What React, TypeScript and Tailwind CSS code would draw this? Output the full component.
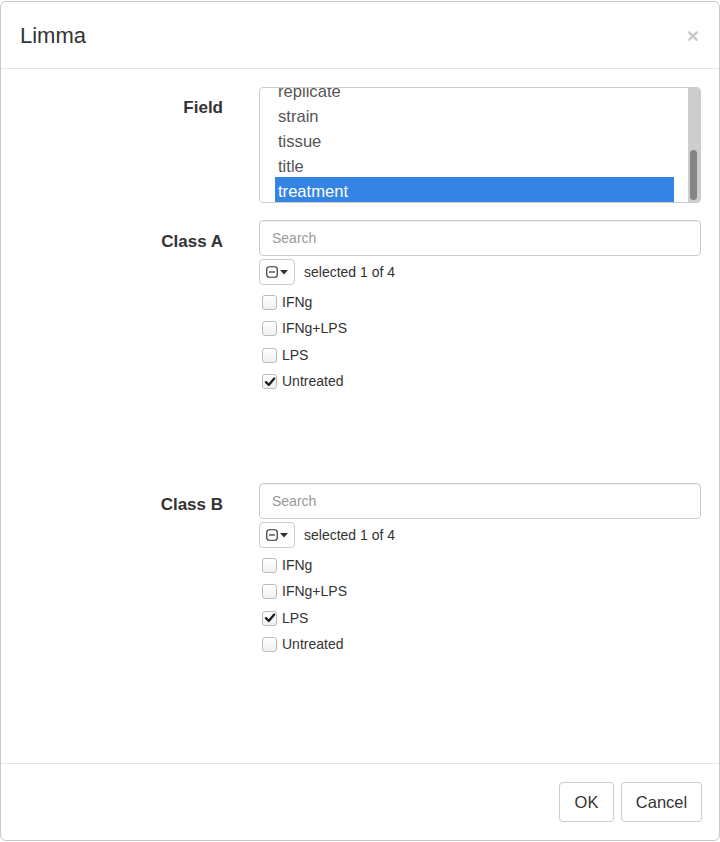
import { useState } from "react";

const fieldItems = ["replicate", "strain", "tissue", "title", "treatment"];

function Checkbox({ checked }: { checked: boolean }) {
  return (
    <span className="flex h-[15px] w-[15px] shrink-0 items-center justify-center rounded-[3px] border border-[#bcbcbc] bg-gradient-to-b from-white to-[#f0f0f0]">
      {checked && (
        <svg viewBox="0 0 12 12" className="h-[12px] w-[12px]">
          <path d="M2 6.2 L4.8 9 L10.2 2.6" fill="none" stroke="#222" strokeWidth="2.4" strokeLinecap="round" strokeLinejoin="round" />
        </svg>
      )}
    </span>
  );
}

function ClassPicker({ label, selected }: { label: string; selected: string }) {
  const options = ["IFNg", "IFNg+LPS", "LPS", "Untreated"];
  return (
    <div className="flex h-[263px]">
      <div className="w-[222px] shrink-0 pt-[9px] text-right text-[17px] font-bold text-[#333]">{label}</div>
      <div className="ml-[36px] flex-1">
        <input
          placeholder="Search"
          className="h-[36px] w-full rounded-[4px] border border-[#ccc] px-[12px] text-[14px] text-[#555] shadow-[inset_0_1px_1px_rgba(0,0,0,0.075)] outline-none placeholder:text-[#999]"
        />
        <div className="mt-[3px] flex items-center">
          <button className="flex h-[26px] w-[36px] items-center justify-center gap-[2px] rounded-[4px] border border-[#ccc] bg-white">
            <svg viewBox="0 0 12 12" className="h-[12px] w-[12px]">
              <rect x="0.75" y="0.75" width="10.5" height="10.5" rx="2.5" fill="none" stroke="#333" strokeWidth="1.2" />
              <path d="M3 6 H9" stroke="#333" strokeWidth="1.2" />
            </svg>
            <svg viewBox="0 0 8 5" className="h-[5px] w-[8px]">
              <path d="M0 0 H8 L4 4.5 Z" fill="#333" />
            </svg>
          </button>
          <span className="ml-[9px] text-[14px] text-[#333]">selected 1 of 4</span>
        </div>
        <ul className="mt-[4px] ml-[3px]">
          {options.map((o) => (
            <li key={o} className="flex h-[26.5px] items-center gap-[5px] text-[14px] text-[#333]">
              <Checkbox checked={o === selected} />
              <span>{o}</span>
            </li>
          ))}
        </ul>
      </div>
    </div>
  );
}

export default function App() {
  const [field] = useState("treatment");

  return (
    <div className="h-[842px] w-[720px] overflow-hidden bg-white pt-[1px] font-['Liberation_Sans',Arial,sans-serif]">
      <div className="flex h-[840px] flex-col rounded-[6px] border border-[#c8c8c8] bg-white">
        {/* Header */}
        <div className="flex h-[67px] shrink-0 items-center justify-between border-b border-[#e5e5e5] pl-[19px] pr-[20px]">
          <h4 className="text-[22px] text-[#333]">Limma</h4>
          <button className="text-[21px] font-bold leading-none text-[#c8c8c8]">×</button>
        </div>

        {/* Body */}
        <div className="flex-1 pr-[18px] pt-[18px]">
          <div className="mb-[17px] flex">
            <div className="w-[222px] shrink-0 pt-[8px] text-right text-[17px] font-bold text-[#333]">Field</div>
            <div className="ml-[36px] flex h-[116px] flex-1 overflow-hidden rounded-[4px] border border-[#ccc]">
              <div className="flex-1 overflow-hidden">
                {/* list scrolled to the bottom */}
                <ul className="mt-[-11px] ml-[15px] mr-[14px]">
                  {fieldItems.map((f) => (
                    <li
                      key={f}
                      className={
                        f === field
                          ? "h-[25px] bg-[#3584e4] pl-[3px] text-[16.6px] leading-[30px] text-white"
                          : "h-[25px] pl-[3px] text-[16.6px] leading-[30px] text-[#555]"
                      }
                    >
                      {f}
                    </li>
                  ))}
                </ul>
              </div>
              <div className="relative w-[12px] shrink-0 bg-[#cdcdcd]">
                <div className="absolute bottom-[2px] left-[2px] h-[50px] w-[7px] rounded-full bg-[#858585]" />
              </div>
            </div>
          </div>

          <ClassPicker label="Class A" selected="Untreated" />
          <ClassPicker label="Class B" selected="LPS" />
        </div>

        {/* Footer */}
        <div className="flex h-[77px] shrink-0 items-start justify-end gap-[7px] border-t border-[#e5e5e5] pr-[17px] pt-[18px]">
          <button className="h-[40px] w-[55px] rounded-[4px] border border-[#ccc] bg-white text-[16.5px] text-[#333]">OK</button>
          <button className="h-[40px] w-[81px] rounded-[4px] border border-[#ccc] bg-white text-[16.5px] text-[#333]">Cancel</button>
        </div>
      </div>
    </div>
  );
}
